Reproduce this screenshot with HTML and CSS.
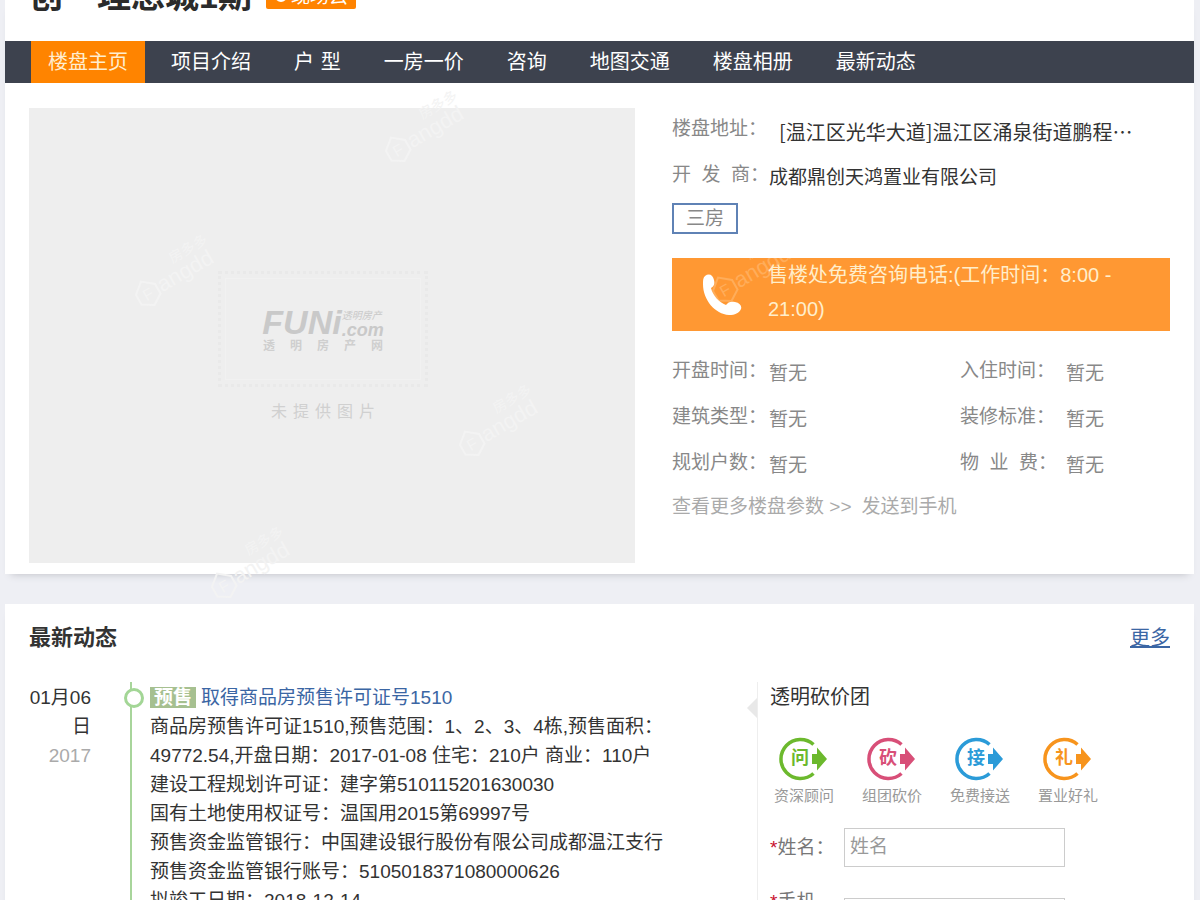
FILE: index.html
```html
<!DOCTYPE html>
<html lang="zh-CN">
<head>
<meta charset="utf-8">
<meta name="viewport" content="width=device-width, initial-scale=1">
<title>创・理想城1期</title>
<link rel="stylesheet" href="styles.css">
</head>
<body>
<svg class="defs" aria-hidden="true">
  <symbol id="ring" viewBox="0 0 60 46">
    <path d="M39.500 8.500A19.500 19.500 0 1 0 39.500 37.500" fill="none" stroke="currentColor" stroke-width="3.500"/>
    <path d="M38 18h5v-6.500l10 11.500-10 11.500V28h-5z" fill="currentColor"/>
  </symbol>
  <symbol id="mark" viewBox="0 0 110 80">
    <g transform="rotate(-30 14 58)" fill="currentColor">
      <path d="M3 55L14 46l11 9v11l-11 7-11-7z" fill="none" stroke="currentColor" stroke-width="2"/>
      <text x="9" y="66" font-size="16">F</text>
      <text x="27" y="66" font-size="22">angdd</text>
      <text x="50" y="46" font-size="14">房多多</text>
    </g>
  </symbol>
</svg>
<main class="page">
  <section class="card">
    <header class="title-bar">
      <h1>创・理想城1期</h1>
      <span class="live"><svg viewBox="0 0 14 14" aria-hidden="true"><circle cx="7" cy="7" r="5" fill="none" stroke="#fff" stroke-width="2"/></svg>现场云</span>
    </header>
    <nav class="nav">
      <a class="active" href="#">楼盘主页</a>
      <a href="#">项目介绍</a>
      <a href="#">户&emsp13;型</a>
      <a href="#">一房一价</a>
      <a href="#">咨询</a>
      <a href="#">地图交通</a>
      <a href="#">楼盘相册</a>
      <a href="#">最新动态</a>
    </nav>
    <div class="overview">
      <div class="photo">
        <div class="stamp">
          <div class="logo"><b>FUNi</b><span><small>透明房产</small><i>.com</i></span></div>
          <div class="slogan"><span>透</span><span>明</span><span>房</span><span>产</span><span>网</span></div>
        </div>
        <div class="missing"><span>未</span><span>提</span><span>供</span><span>图</span><span>片</span></div>
        <svg class="mark m1" aria-hidden="true"><use href="#mark"/></svg>
        <svg class="mark m2" aria-hidden="true"><use href="#mark"/></svg>
        <svg class="mark m3" aria-hidden="true"><use href="#mark"/></svg>
        <svg class="mark m4" aria-hidden="true"><use href="#mark"/></svg>
      </div>
      <div class="info">
        <dl class="row"><dt>楼盘地址：</dt><dd class="address">[温江区光华大道]温江区涌泉街道鹏程…</dd></dl>
        <dl class="row"><dt class="spread"><span>开</span><span>发</span><span>商：</span></dt><dd>成都鼎创天鸿置业有限公司</dd></dl>
        <div class="tags"><a href="#">三房</a></div>
        <div class="phone">
          <svg class="mark m5" aria-hidden="true"><use href="#mark"/></svg>
          <svg class="handset" viewBox="0 0 40 42" aria-hidden="true"><path d="M3 2C7-1 11 1 12 6c1 4 0 6-3 8 2 8 8 14 15 17 2-3 5-4 9-3 5 1 7 4 6 7-2 4-6 6-12 6C13 40 1 26 1 10 1 6 1 4 3 2z" fill="#fff"/></svg>
          <p>售楼处免费咨询电话:(工作时间：8:00 - 21:00)</p>
        </div>
        <div class="facts">
          <dl class="row"><dt>开盘时间：</dt><dd>暂无</dd></dl>
          <dl class="row"><dt>入住时间：</dt><dd>暂无</dd></dl>
          <dl class="row"><dt>建筑类型：</dt><dd>暂无</dd></dl>
          <dl class="row"><dt>装修标准：</dt><dd>暂无</dd></dl>
          <dl class="row"><dt>规划户数：</dt><dd>暂无</dd></dl>
          <dl class="row"><dt class="spread"><span>物</span><span>业</span><span>费：</span></dt><dd>暂无</dd></dl>
        </div>
        <p class="links"><a href="#">查看更多楼盘参数 &gt;&gt;</a><a href="#">发送到手机</a></p>
      </div>
    </div>
  </section>

  <section class="card news">
    <header class="news-head"><h2>最新动态</h2><a href="#">更多</a></header>
    <div class="news-body">
      <div class="date">01月06日<span>2017</span></div>
      <article class="entry">
        <h3><span class="status">预售</span><a href="#">取得商品房预售许可证号1510</a></h3>
        <p>商品房预售许可证1510,预售范围：1、2、3、4栋,预售面积：<br>49772.54,开盘日期：2017-01-08 住宅：210户 商业：110户<br>建设工程规划许可证：建字第510115201630030<br>国有土地使用权证号：温国用2015第69997号<br>预售资金监管银行：中国建设银行股份有限公司成都温江支行<br>预售资金监管银行账号：5105018371080000626<br>拟竣工日期：2018-12-14</p>
      </article>
      <form class="group">
        <h3>透明砍价团</h3>
        <ul class="perks">
          <li class="green"><div class="badge"><svg aria-hidden="true"><use href="#ring"/></svg><b>问</b></div>资深顾问</li>
          <li class="pink"><div class="badge"><svg aria-hidden="true"><use href="#ring"/></svg><b>砍</b></div>组团砍价</li>
          <li class="blue"><div class="badge"><svg aria-hidden="true"><use href="#ring"/></svg><b>接</b></div>免费接送</li>
          <li class="orange"><div class="badge"><svg aria-hidden="true"><use href="#ring"/></svg><b>礼</b></div>置业好礼</li>
        </ul>
        <div class="field"><label for="name"><em>*</em>姓名：</label><input id="name" type="text" placeholder="姓名"></div>
        <div class="field tel"><label for="tel"><em>*</em>手机</label><input id="tel" type="tel"></div>
      </form>
    </div>
  </section>
</main>
</body>
</html>
```

FILE: styles.css
```css
* { box-sizing: border-box; }
body {
  margin: 0;
  height: 100vh;
  overflow: hidden;
  background: #eeeff4;
  color: #333;
  font: 19px/29px "Liberation Sans", "Noto Sans CJK SC", sans-serif;
}
h1, h2, h3, p, dl, dd, ul { margin: 0; padding: 0; }
a { color: inherit; text-decoration: none; }
.defs { position: absolute; width: 0; height: 0; }

.page { padding: 0 6px 0 5px; display: flex; flex-direction: column; gap: 30px; }
.card { background: #fff; box-shadow: 0 6px 8px -6px #bbbcc2; }

.title-bar { height: 41px; padding: 0 24px 28px; display: flex; align-items: flex-end; gap: 14px; overflow: hidden; }
.title-bar h1 { font-size: 34px; line-height: 34px; color: #2b2b2b; white-space: nowrap; }
.live {
  display: flex; align-items: center; gap: 3px;
  height: 26px; margin-bottom: 4px; padding: 0 8px;
  border-radius: 2px; background: #ff8300; color: #fff; white-space: nowrap;
}
.live svg { width: 14px; height: 14px; }

.nav { display: flex; gap: 9px; padding: 0 26px; background: #3d424e; color: #fff; font-size: 20px; line-height: 42px; }
.nav a { padding: 0 17px; white-space: nowrap; }
.nav .active { background: #ff8400; color: #ffeed0; }

.overview { display: grid; grid-template-columns: 606fr 498fr; gap: 37px; padding: 25px 24px 11px; }
.photo {
  position: relative; aspect-ratio: 4 / 3; padding-right: 18px; background: #eee; color: #d0d0d0;
  display: flex; flex-direction: column; align-items: center; justify-content: center; gap: 10px;
}
.stamp {
  width: 210px; height: 116px; margin-top: 26px; border: 3px dotted #e9e9e9; outline: 1px solid #f1f1f1; outline-offset: -8px;
  display: flex; flex-direction: column; align-items: center; justify-content: center;
}
.logo { display: flex; align-items: flex-end; color: #c9c9c9; font-style: italic; }
.logo b { font-size: 34px; line-height: 34px; }
.logo span { display: flex; flex-direction: column; }
.logo small { font-size: 10px; line-height: 10px; }
.logo i { font-size: 18px; font-weight: bold; line-height: 18px; }
.slogan { display: flex; gap: 15px; font-size: 12px; line-height: 14px; font-weight: bold; color: #cfcfcf; }
.missing { display: flex; gap: 6px; font-size: 16px; }
.mark { position: absolute; width: 110px; height: 80px; color: #f3f3f3; pointer-events: none; }
.m1 { left: 104px; top: 126px; }
.m2 { left: 354px; top: -18px; }
.m3 { left: 428px; top: 276px; }
.m4 { left: 180px; top: 418px; }
.m5 { left: 38px; top: -28px; color: #ffad5a; }

.info { min-width: 0; color: #888; }
.row { display: flex; height: 46px; line-height: 42px; white-space: nowrap; }
.row dt { width: 97px; flex: none; }
.row dd { padding-top: 3px; }
.info > .row dd { color: #333; }
.info > .row .address { font-family: "Noto Sans CJK SC", sans-serif; font-size: 20px; padding-left: 10px; }
.spread { display: flex; justify-content: space-between; }
.tags { display: flex; margin-top: 3px; }
.tags a { padding: 0 12px; border: 2px solid #5f82b5; line-height: 27px; }
.phone {
  position: relative; display: flex; align-items: center; overflow: hidden;
  margin: 24px 0 19px; padding: 0 30px; background: #ff9833; color: #ffeecb; font-size: 20px; line-height: 34px;
}
.phone p { position: relative; padding: 0 0 5px 26px; min-width: 0; flex: 1; }
.handset { position: relative; width: 40px; height: 42px; flex: none; }
.facts { display: grid; grid-template-columns: 288px 1fr; }
.facts .row:nth-child(even) dt { width: 106px; }
.facts .row:nth-child(even) .spread { padding-right: 9px; }
.links { display: flex; gap: 10px; color: #aaa; line-height: 38px; }

.news { padding: 16px 24px 0; }
.news-head { display: flex; justify-content: space-between; line-height: 36px; }
.news-head h2 { font-size: 22px; }
.news-head a { font-size: 20px; color: #3b66a4; text-decoration: underline; }
.news-body { display: grid; grid-template-columns: 62px 666px 1fr; margin-top: 26px; }
.date { padding-top: 1px; text-align: right; word-break: break-all; }
.date span { display: block; color: #aaa; }
.entry { position: relative; margin-left: 39px; padding: 1px 0 6px 18px; border-left: 2px solid #a8d59b; white-space: nowrap; }
.entry::before {
  content: ""; position: absolute; left: -8px; top: 6px; width: 14px; height: 14px;
  border: 3px solid #a3d696; border-radius: 50%; background: #fff;
}
.entry h3 { display: flex; align-items: center; gap: 5px; font-size: 19px; font-weight: normal; }
.entry h3 a { color: #3b66a4; }
.status { padding: 0 4px; background: #a6c090; color: #fff; font-weight: bold; line-height: 21px; }

.group { position: relative; padding: 1px 0 0 12px; border-left: 1px solid #eee; }
.group::before {
  content: ""; position: absolute; left: -11px; top: 16px;
  border: solid transparent; border-width: 10px 10px 10px 0; border-right-color: #e8e8e8;
}
.group h3 { font-size: 20px; font-weight: normal; }
.perks { display: flex; gap: 28px; margin: 24px 0 0 4px; list-style: none; }
.perks li { width: 60px; font-size: 15px; line-height: 28px; color: #999; white-space: nowrap; }
.badge { position: relative; height: 46px; }
.badge svg { display: block; width: 60px; height: 46px; }
.badge b { position: absolute; left: 17px; top: 11px; font-size: 18px; line-height: 22px; }
.green .badge { color: #6cb92d; }
.pink .badge { color: #d84f78; }
.blue .badge { color: #2b9bd8; }
.orange .badge { color: #f7941d; }
.field { display: flex; align-items: center; margin-top: 18px; }
.field label { width: 74px; color: #777; white-space: nowrap; }
.field em { color: #c8102e; font-style: normal; }
.field input { width: 221px; height: 39px; padding: 0 5px; border: 1px solid #ccc; font: inherit; color: #333; background: #fff; }
.field input::placeholder { color: #999; opacity: 1; }
.tel { align-items: flex-start; margin-top: 20px; }
.tel input { margin-top: 11px; }
```
